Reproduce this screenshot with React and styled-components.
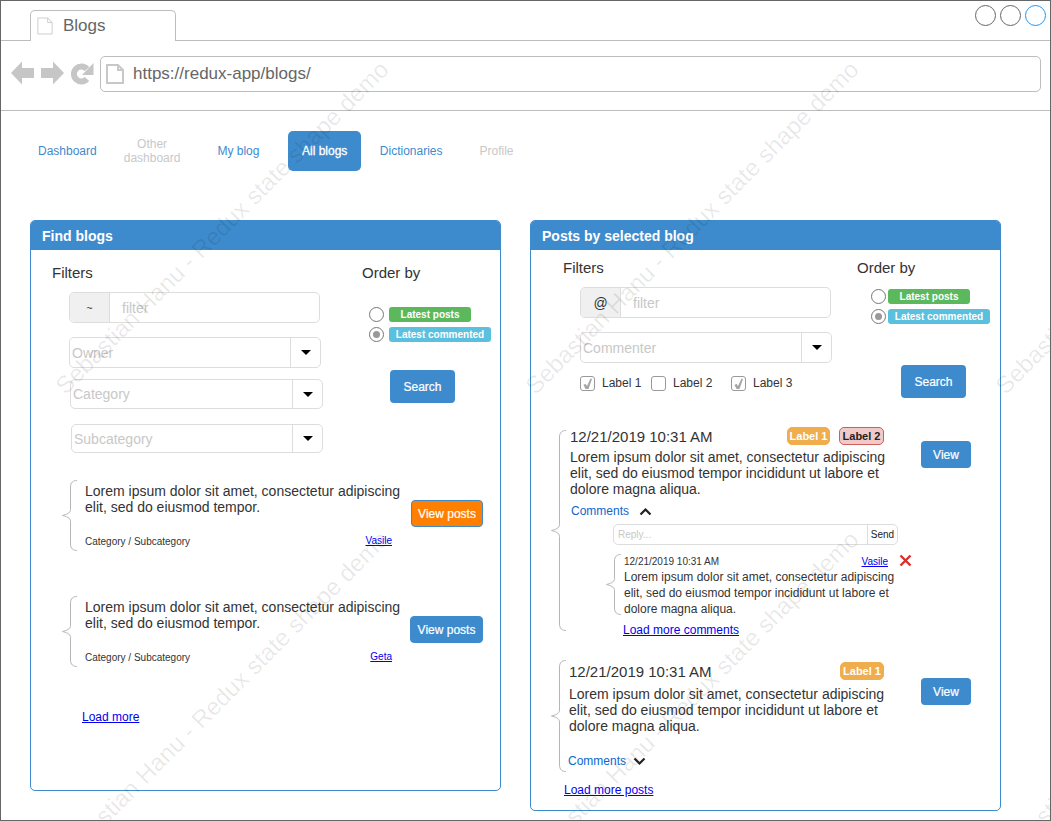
import React from "react";
import styled, { createGlobalStyle } from "styled-components";

const BLUE = "#3d8bcd";

const GlobalStyle = createGlobalStyle`
  html, body {
    margin: 0;
    padding: 0;
    background: #fff;
    font-family: "Liberation Sans", Arial, sans-serif;
    color: #333;
  }
  * {
    box-sizing: border-box;
  }
`;

const Frame = styled.div`
  position: relative;
  width: 1051px;
  height: 821px;
  border: 1px solid #666;
  overflow: hidden;
  background: #fff;
`;

const Watermark = styled.span`
  position: absolute;
  left: ${(p) => p.$x}px;
  top: ${(p) => p.$y}px;
  font-size: 24px;
  line-height: 28px;
  color: rgba(0, 0, 0, 0.09);
  white-space: nowrap;
  transform-origin: left top;
  transform: rotate(-45deg);
  pointer-events: none;
`;

const TabBar = styled.div`
  display: flex;
  height: 40px;
  padding-left: 29px;
  border-bottom: 1px solid #bdbdbd;
`;

const Tab = styled.div`
  display: flex;
  align-items: center;
  width: 146px;
  height: 31px;
  margin-top: 9px;
  padding-left: 6px;
  border: 1px solid #bdbdbd;
  border-bottom: 0;
  border-radius: 5px 5px 0 0;
  background: #fff;
  font-size: 17px;
  color: #666;
  span {
    margin-left: 10px;
  }
`;

const WindowButtons = styled.div`
  display: flex;
  gap: 4px;
  margin: 4px 4px 0 auto;
`;

const WindowButton = styled.div`
  width: 21px;
  height: 21px;
  border-radius: 50%;
  border: 1px solid ${(p) => (p.$active ? "#2196f3" : "#666")};
`;

const AddressBar = styled.div`
  display: flex;
  align-items: center;
  height: 70px;
  padding-left: 10px;
  border-bottom: 1px solid #bdbdbd;
`;

const NavIcons = styled.svg`
  display: block;
  flex: none;
  margin: -4px 5px 0 0;
`;

const UrlBox = styled.div`
  display: flex;
  align-items: center;
  width: 941px;
  height: 36px;
  margin-top: -3px;
  padding-left: 5px;
  border: 1px solid #bdbdbd;
  border-radius: 5px;
  font-size: 17px;
  color: #666;
  span {
    margin-left: 9px;
  }
`;

const Nav = styled.nav`
  display: flex;
  height: 40px;
  margin: 20px 0 49px 23px;
`;

const NavItem = styled.div`
  display: flex;
  align-items: center;
  justify-content: center;
  height: 40px;
  margin-left: ${(p) => p.$ml || 0}px;
  padding: 0 ${(p) => (p.$active ? 13.5 : 14)}px;
  border-radius: 5px;
  font-size: 12px;
  line-height: 14px;
  text-align: center;
  color: ${(p) => (p.$active ? "#fff" : p.$disabled ? "#c8c8c8" : BLUE)};
  background: ${(p) => (p.$active ? BLUE : "transparent")};
  -webkit-text-stroke: ${(p) => (p.$active ? "0.3px #fff" : "0")};
`;

const Columns = styled.div`
  display: flex;
  align-items: flex-start;
  padding-left: 29px;
`;

const Panel = styled.section`
  width: 471px;
  height: ${(p) => p.$height}px;
  margin-right: ${(p) => p.$mr || 0}px;
  border: 1px solid ${BLUE};
  border-radius: 5px;
  overflow: hidden;
`;

const PanelHeader = styled.h2`
  display: flex;
  align-items: center;
  height: 29px;
  margin: 0;
  padding-left: 11px;
  background: ${BLUE};
  font-size: 14px;
  font-weight: 700;
  color: #fff;
`;

const FilterArea = styled.div`
  display: flex;
  align-items: flex-start;
  padding-top: ${(p) => p.$top}px;
`;

const FilterColumn = styled.div`
  flex: none;
  width: ${(p) => p.$width}px;
`;

const Heading = styled.div`
  margin-left: ${(p) => p.$ml || 0}px;
  font-size: 15px;
  line-height: 16px;
  color: #333;
`;

const InputGroup = styled.div`
  display: flex;
  width: 251px;
  height: 31px;
  margin: 11px 0 0 ${(p) => p.$ml}px;
  border: 1px solid #ddd;
  border-radius: 5px;
  overflow: hidden;
`;

const Addon = styled.div`
  display: flex;
  align-items: center;
  justify-content: center;
  flex: none;
  width: 40px;
  background: #f0f0f0;
  border-right: 1px solid #ddd;
  font-size: ${(p) => p.$size}px;
  color: #333;
`;

const Placeholder = styled.div`
  display: flex;
  align-items: center;
  flex: 1;
  padding-left: ${(p) => p.$pl || 0}px;
  font-size: ${(p) => p.$size || 14}px;
  color: #c8c8c8;
`;

const Select = styled.div`
  display: flex;
  width: ${(p) => p.$w}px;
  height: ${(p) => p.$h}px;
  margin: ${(p) => p.$mt}px 0 0 ${(p) => p.$ml}px;
  border: 1px solid #ddd;
  border-radius: 5px;
`;

const Caret = styled.div`
  display: flex;
  align-items: center;
  justify-content: center;
  flex: none;
  width: 30px;
  border-left: 1px solid #ddd;
  &::after {
    content: "";
    border-left: 5px solid transparent;
    border-right: 5px solid transparent;
    border-top: 5px solid #000;
  }
`;

const CheckRow = styled.div`
  display: flex;
  align-items: center;
  height: 16px;
  margin: 12px 0 0 49px;
`;

const Check = styled.div`
  display: flex;
  align-items: center;
  justify-content: center;
  flex: none;
  width: 15px;
  height: 15px;
  border: 1px solid #999;
  border-radius: 3px;
`;

const CheckLabel = styled.span`
  margin-left: 7px;
  width: ${(p) => p.$w}px;
  font-size: 12px;
  color: #333;
`;

const OrderRows = styled.div`
  display: flex;
  flex-direction: column;
  gap: 5px;
  margin: ${(p) => p.$mt}px 0 0 ${(p) => p.$ml}px;
`;

const OrderRow = styled.div`
  display: flex;
  align-items: center;
  gap: ${(p) => p.$gap}px;
`;

const Radio = styled.div`
  display: flex;
  align-items: center;
  justify-content: center;
  width: 15px;
  height: 15px;
  border: 1px solid #777;
  border-radius: 50%;
  &::after {
    content: "";
    display: ${(p) => (p.$checked ? "block" : "none")};
    width: 7px;
    height: 7px;
    border-radius: 50%;
    background: #999;
  }
`;

const Badge = styled.div`
  display: flex;
  align-items: center;
  justify-content: center;
  width: ${(p) => p.$w}px;
  height: 15px;
  border-radius: 3px;
  background: ${(p) => p.$bg};
  font-size: 10px;
  font-weight: 700;
  color: #fff;
`;

const SearchButton = styled.div`
  display: flex;
  align-items: center;
  justify-content: center;
  width: 65px;
  height: 33px;
  margin: ${(p) => p.$mt}px 0 0 ${(p) => p.$ml}px;
  border-radius: 4px;
  background: ${BLUE};
  font-size: 12px;
  color: #fff;
  -webkit-text-stroke: 0.2px #fff;
`;

const BlogItem = styled.div`
  display: flex;
  height: 71px;
  margin: ${(p) => p.$mt}px 0 0 31px;
`;

const BraceSvg = styled.svg`
  display: block;
  flex: none;
  fill: none;
  stroke: #b5b5b5;
  stroke-width: 1;
`;

const BlogBody = styled.div`
  display: flex;
  flex-direction: column;
  justify-content: space-between;
  flex: none;
  width: 320px;
  margin-left: 8px;
  padding: 3px 0;
`;

const LoremText = styled.div`
  font-size: ${(p) => p.$size || 14}px;
  line-height: 16px;
  max-width: ${(p) => p.$max || 322}px;
  color: #333;
`;

const MetaRow = styled.div`
  display: flex;
  align-items: center;
  justify-content: space-between;
  padding-right: 13px;
  font-size: 10px;
  line-height: 12px;
  color: #333;
  a {
    margin-top: -2px;
  }
`;

const Link = styled.a`
  font-size: ${(p) => p.$size || 12}px;
  line-height: ${(p) => (p.$size === 10 ? 12 : 14)}px;
  color: #00e;
  text-decoration: underline;
`;

const ViewPosts = styled.div`
  display: flex;
  align-items: center;
  justify-content: center;
  flex: none;
  align-self: center;
  width: ${(p) => (p.$orange ? 72 : 73)}px;
  height: 27px;
  margin: -4px 0 0 ${(p) => (p.$orange ? 6 : 5)}px;
  border-radius: 4px;
  border: 1px solid ${BLUE};
  background: ${(p) => (p.$orange ? "#ff8000" : BLUE)};
  font-size: 12px;
  color: #fff;
  -webkit-text-stroke: 0.2px #fff;
`;

const LoadMore = styled.div`
  display: flex;
  margin: ${(p) => p.$mt}px 0 0 ${(p) => p.$ml}px;
`;

const PostRow = styled.div`
  display: flex;
  align-items: flex-start;
  margin: ${(p) => p.$mt}px 0 0 20px;
`;

const PostBody = styled.div`
  flex: none;
  width: 345px;
  margin: ${(p) => p.$mt}px 0 0 ${(p) => p.$ml}px;
`;

const PostHead = styled.div`
  display: flex;
  align-items: center;
  width: ${(p) => p.$w}px;
  height: 18px;
  margin-bottom: ${(p) => p.$mb}px;
  font-size: 15px;
  color: #333;
`;

const PostDate = styled.span`
  margin-right: auto;
`;

const Tag = styled.div`
  display: flex;
  align-items: center;
  justify-content: center;
  width: ${(p) => p.$w}px;
  height: 18px;
  margin-left: ${(p) => p.$ml}px;
  border-radius: 5px;
  font-size: 11px;
  font-weight: 700;
  color: ${(p) => (p.$red ? "#222" : "#fff")};
  background: ${(p) => (p.$red ? "#f2c9c9" : "#f0ad4e")};
  border: 1px solid ${(p) => (p.$red ? "#c9605c" : "#f0ad4e")};
`;

const Comments = styled.div`
  display: flex;
  align-items: center;
  height: 14px;
  margin: ${(p) => p.$mt}px 0 0 ${(p) => p.$ml || 0}px;
  font-size: 12px;
  color: #0d66d0;
  svg {
    margin-left: ${(p) => p.$gap}px;
  }
`;

const ReplyBox = styled.div`
  display: flex;
  width: 285px;
  height: 21px;
  margin: 6px 0 0 43px;
  border: 1px solid #ddd;
  border-radius: 5px;
`;

const SendButton = styled.div`
  display: flex;
  align-items: center;
  justify-content: center;
  flex: none;
  width: 30px;
  border-left: 1px solid #ddd;
  font-size: 10px;
  color: #222;
`;

const CommentRow = styled.div`
  display: flex;
  margin: 9px 0 0 36px;
`;

const CommentBody = styled.div`
  flex: none;
  width: 288px;
  margin-left: 3px;
`;

const CommentHead = styled.div`
  display: flex;
  align-items: center;
  height: 15px;
  font-size: 10px;
  color: #333;
  a {
    margin-left: auto;
  }
  svg {
    margin: -3px 0 0 11px;
  }
`;

const ViewButton = styled.div`
  display: flex;
  align-items: center;
  justify-content: center;
  flex: none;
  width: 50px;
  height: 27px;
  margin: ${(p) => p.$mt}px 0 0 ${(p) => p.$ml}px;
  border-radius: 4px;
  background: ${BLUE};
  font-size: 12px;
  color: #fff;
  -webkit-text-stroke: 0.2px #fff;
`;

const LOREM_SHORT = "Lorem ipsum dolor sit amet, consectetur adipiscing elit, sed do eiusmod tempor.";
const LOREM_LONG =
  "Lorem ipsum dolor sit amet, consectetur adipiscing elit, sed do eiusmod tempor incididunt ut labore et dolore magna aliqua.";
const DATE = "12/21/2019 10:31 AM";

const WATERMARKS = [
  [49, 379],
  [519, 379],
  [989, 379],
  [49, 849],
  [519, 849],
  [989, 849],
];

function Brace({ height }) {
  const mid = height / 2;
  return (
    <BraceSvg width="15" height={height} viewBox={`0 0 15 ${height}`}>
      <path
        d={`M15 0.5 C11 0.5 8.5 2.5 8.5 7 L8.5 ${mid - 6} C8.5 ${mid - 2} 4 ${mid - 1} 0.5 ${mid} C4 ${mid + 1} 8.5 ${mid + 2} 8.5 ${mid + 6} L8.5 ${height - 7} C8.5 ${height - 2.5} 11 ${height - 0.5} 15 ${height - 0.5}`}
      />
    </BraceSvg>
  );
}

function PageIcon({ width, height, strokeWidth }) {
  return (
    <svg width={width} height={height} viewBox="0 0 18 20" style={{ flex: "none" }}>
      <path
        d="M1 1 H12 L17 6 V19 H1 Z M12 1 V6 H17"
        fill="#fff"
        stroke="#c8c8c8"
        strokeWidth={strokeWidth}
      />
    </svg>
  );
}

function Chevron({ up }) {
  return (
    <svg width="13" height="9" viewBox="0 0 13 9">
      <path
        d={up ? "M1.5 7.5 L6.5 2.5 L11.5 7.5" : "M1.5 1.5 L6.5 6.5 L11.5 1.5"}
        fill="none"
        stroke="#222"
        strokeWidth="2.2"
      />
    </svg>
  );
}

function Tick() {
  return (
    <svg width="13" height="13" viewBox="0 0 13 13">
      <path d="M2.5 8 L4.5 6.8 L6 9 L9.5 1.5 L11 2 L7.5 12 H4.5 Z" fill="#a6a6a6" />
    </svg>
  );
}

function OrderBy({ marginTop, marginLeft, gap }) {
  return (
    <OrderRows $mt={marginTop} $ml={marginLeft}>
      <OrderRow $gap={gap}>
        <Radio />
        <Badge $w={82} $bg="#5cb85c">Latest posts</Badge>
      </OrderRow>
      <OrderRow $gap={gap}>
        <Radio $checked />
        <Badge $w={102} $bg="#5bc0de">Latest commented</Badge>
      </OrderRow>
    </OrderRows>
  );
}

function SelectField({ label, w, h, mt, ml }) {
  return (
    <Select $w={w} $h={h} $mt={mt} $ml={ml}>
      <Placeholder $pl={2}>{label}</Placeholder>
      <Caret />
    </Select>
  );
}

function BlogEntry({ marginTop, author, orange }) {
  return (
    <BlogItem $mt={marginTop}>
      <Brace height={71} />
      <BlogBody>
        <LoremText>{LOREM_SHORT}</LoremText>
        <MetaRow>
          <span>Category / Subcategory</span>
          <Link $size={10}>{author}</Link>
        </MetaRow>
      </BlogBody>
      <ViewPosts $orange={orange}>View posts</ViewPosts>
    </BlogItem>
  );
}

export default function App() {
  return (
    <>
      <GlobalStyle />
      <Frame>
        <TabBar>
          <Tab>
            <PageIcon width={16} height={20} strokeWidth={1} />
            <span>Blogs</span>
          </Tab>
          <WindowButtons>
            <WindowButton />
            <WindowButton />
            <WindowButton $active />
          </WindowButtons>
        </TabBar>

        <AddressBar>
          <NavIcons width="84" height="26" viewBox="0 0 84 26">
            <path d="M0 12 L11 0.5 V7 H23 V17 H11 V23.5 Z" fill="#c6c6c6" />
            <path d="M53 12 L42 0.5 V7 H30 V17 H42 V23.5 Z" fill="#c6c6c6" />
            <path d="M76 8 A7.5 7.5 0 1 0 76 18" fill="none" stroke="#c6c6c6" strokeWidth="6" />
            <path d="M82.5 2 V14 H71 Z" fill="#c6c6c6" />
          </NavIcons>
          <UrlBox>
            <PageIcon width={18} height={20} strokeWidth={2} />
            <span>https://redux-app/blogs/</span>
          </UrlBox>
        </AddressBar>

        <Nav>
          <NavItem>Dashboard</NavItem>
          <NavItem $ml={-1} $disabled>
            Other
            <br />
            dashboard
          </NavItem>
          <NavItem $ml={9}>My blog</NavItem>
          <NavItem $ml={15} $active>All blogs</NavItem>
          <NavItem $ml={5}>Dictionaries</NavItem>
          <NavItem $ml={9} $disabled>Profile</NavItem>
        </Nav>

        <Columns>
          <Panel $height={571} $mr={29}>
            <PanelHeader>Find blogs</PanelHeader>
            <FilterArea $top={15}>
              <FilterColumn $width={331}>
                <Heading $ml={21}>Filters</Heading>
                <InputGroup $ml={38}>
                  <Addon $size={11}>~</Addon>
                  <Placeholder $pl={12}>filter</Placeholder>
                </InputGroup>
                <SelectField label="Owner" w={252} h={31} mt={14} ml={38} />
                <SelectField label="Category" w={253} h={30} mt={11} ml={39} />
                <SelectField label="Subcategory" w={252} h={29} mt={15} ml={40} />
              </FilterColumn>
              <div>
                <Heading>Order by</Heading>
                <OrderBy marginTop={26} marginLeft={7} gap={5} />
                <SearchButton $mt={28} $ml={28}>Search</SearchButton>
              </div>
            </FilterArea>
            <BlogEntry marginTop={27} author="Vasile" orange />
            <BlogEntry marginTop={45} author="Geta" />
            <LoadMore $mt={43} $ml={51}>
              <Link>Load more</Link>
            </LoadMore>
          </Panel>

          <Panel $height={591}>
            <PanelHeader>Posts by selected blog</PanelHeader>
            <FilterArea $top={10}>
              <FilterColumn $width={326}>
                <Heading $ml={32}>Filters</Heading>
                <InputGroup $ml={49}>
                  <Addon $size={14}>@</Addon>
                  <Placeholder $pl={12}>filter</Placeholder>
                </InputGroup>
                <SelectField label="Commenter" w={252} h={31} mt={14} ml={49} />
                <CheckRow>
                  <Check><Tick /></Check>
                  <CheckLabel $w={49}>Label 1</CheckLabel>
                  <Check />
                  <CheckLabel $w={58}>Label 2</CheckLabel>
                  <Check><Tick /></Check>
                  <CheckLabel $w={42}>Label 3</CheckLabel>
                </CheckRow>
              </FilterColumn>
              <div>
                <Heading>Order by</Heading>
                <OrderBy marginTop={13} marginLeft={14} gap={2} />
                <SearchButton $mt={41} $ml={44}>Search</SearchButton>
              </div>
            </FilterArea>

            <PostRow $mt={32}>
              <Brace height={201} />
              <PostBody $mt={-3} $ml={4}>
                <PostHead $w={314} $mb={4}>
                  <PostDate>{DATE}</PostDate>
                  <Tag $w={43} $ml={0}>Label 1</Tag>
                  <Tag $w={45} $ml={9} $red>Label 2</Tag>
                </PostHead>
                <LoremText>{LOREM_LONG}</LoremText>
                <Comments $mt={7} $ml={1} $gap={10}>
                  Comments
                  <Chevron up />
                </Comments>
                <ReplyBox>
                  <Placeholder $pl={4} $size={10}>Reply...</Placeholder>
                  <SendButton>Send</SendButton>
                </ReplyBox>
                <CommentRow>
                  <Brace height={61} />
                  <CommentBody>
                    <CommentHead>
                      <span>{DATE}</span>
                      <Link $size={10}>Vasile</Link>
                      <svg width="13" height="13" viewBox="0 0 13 13">
                        <path d="M1.5 1.5 L11.5 11.5 M11.5 1.5 L1.5 11.5" stroke="#d9302c" strokeWidth="2.4" />
                      </svg>
                    </CommentHead>
                    <LoremText $size={12} $max={275}>{LOREM_LONG}</LoremText>
                  </CommentBody>
                </CommentRow>
                <LoadMore $mt={6} $ml={53}>
                  <Link>Load more comments</Link>
                </LoadMore>
              </PostBody>
              <ViewButton $mt={11} $ml={6}>View</ViewButton>
            </PostRow>

            <PostRow $mt={23}>
              <Brace height={112} />
              <PostBody $mt={2} $ml={3}>
                <PostHead $w={315} $mb={6}>
                  <PostDate>{DATE}</PostDate>
                  <Tag $w={44} $ml={0}>Label 1</Tag>
                </PostHead>
                <LoremText>{LOREM_LONG}</LoremText>
                <Comments $mt={20} $ml={-1} $gap={7}>
                  Comments
                  <Chevron />
                </Comments>
              </PostBody>
              <ViewButton $mt={18} $ml={7}>View</ViewButton>
            </PostRow>

            <LoadMore $mt={11} $ml={33}>
              <Link>Load more posts</Link>
            </LoadMore>
          </Panel>
        </Columns>

        {WATERMARKS.map(([x, y]) => (
          <Watermark key={`${x}-${y}`} $x={x} $y={y}>
            Sebastian Hanu - Redux state shape demo
          </Watermark>
        ))}
      </Frame>
    </>
  );
}
